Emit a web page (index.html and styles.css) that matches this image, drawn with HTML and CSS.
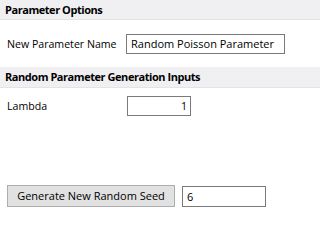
FILE: index.html
```html
<!DOCTYPE html>
<html>
<head>
<meta charset="utf-8">
<link rel="stylesheet" href="styles.css">
</head>
<body>
<div class="panel">
  <div class="section-header">Parameter Options</div>
  <div class="row row-name">
    <div class="label label-name">New Parameter Name</div>
    <div class="textbox box-name">Random Poisson Parameter</div>
  </div>
  <div class="section-header header-gen">Random Parameter Generation Inputs</div>
  <div class="row row-lambda">
    <div class="label label-lambda">Lambda</div>
    <div class="textbox box-lambda">1</div>
  </div>
  <div class="row row-seed">
    <div class="button">Generate New Random Seed</div>
    <div class="textbox box-seed">6</div>
  </div>
</div>
</body>
</html>
```
FILE: styles.css
```css
html, body {
  margin: 0;
  padding: 0;
  background: #ffffff;
}
.panel {
  height: 220px;
  display: flex;
  flex-direction: column;
  font-family: "Open Sans", "Noto Sans", sans-serif;
  font-size: 10.6px;
  color: #000000;
}
.section-header {
  height: 19px;
  line-height: 19px;
  padding-left: 5px;
  background: #f0f0f2;
  border-bottom: 1px solid #e4e4e6;
  font-weight: 700;
  font-size: 11px;
  letter-spacing: -0.45px;
}
.header-gen {
  margin-top: 13px;
  height: 20px;
  line-height: 20px;
}
.row {
  display: flex;
  align-items: center;
}
.row-name {
  margin-top: 14px;
}
.label {
  padding-left: 7px;
  box-sizing: border-box;
}
.label-name {
  width: 126px;
}
.label-lambda {
  width: 127px;
}
.textbox {
  box-sizing: border-box;
  border: 1px solid #7a7a7a;
  background: #ffffff;
  height: 20px;
  line-height: 18px;
  padding: 0 4px;
  white-space: nowrap;
  overflow: hidden;
}
.box-name {
  width: 159px;
  font-size: 11px;
}
.row-lambda {
  margin-top: 8px;
}
.box-lambda {
  width: 64px;
  text-align: right;
  padding-right: 3px;
}
.row-seed {
  margin-top: 69px;
  padding-left: 7px;
  gap: 7px;
}
.button {
  box-sizing: border-box;
  width: 168px;
  height: 22px;
  line-height: 20px;
  text-align: center;
  background: #e1e1e1;
  border: 1px solid #adadad;
  font-size: 11px;
}
.box-seed {
  width: 84px;
  height: 21px;
  line-height: 19px;
  font-size: 11px;
}
```
